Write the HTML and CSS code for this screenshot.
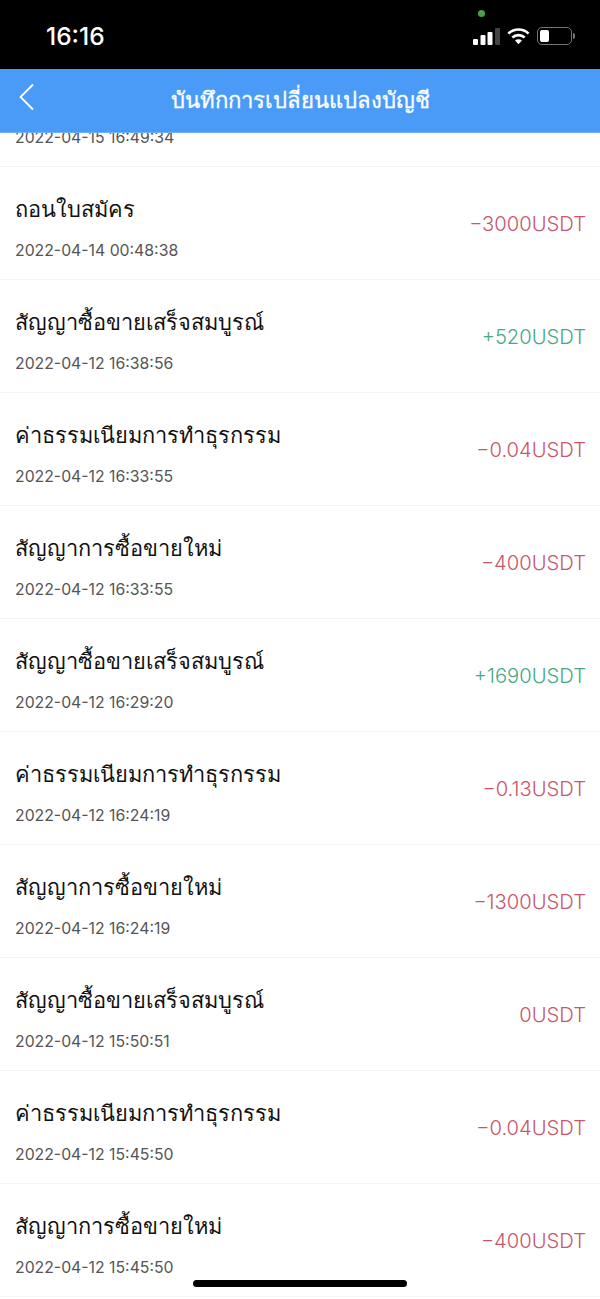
FILE: index.html
```html
<!DOCTYPE html>
<html lang="th">
<head>
<meta charset="UTF-8" />
<meta name="viewport" content="width=device-width, initial-scale=1" />
<title>บันทึกการเปลี่ยนแปลงบัญชี</title>
<link rel="stylesheet" href="styles.css">
</head>
<body>

<div class="screen">
  <div class="status-bar">
    <span class="clock">16:16</span>
    <span class="camera-dot"></span>
    <div class="status-icons">
      <svg class="signal" width="27" height="17" viewBox="0 0 27 17">
        <rect x="0" y="11" width="5" height="6" rx="1" fill="#fff"/>
        <rect x="7.5" y="7" width="5" height="10" rx="1" fill="#fff"/>
        <rect x="14.5" y="4" width="5" height="13" rx="1" fill="#fff"/>
        <rect x="22" y="0" width="5" height="17" rx="1" fill="#444"/>
      </svg>
      <svg class="wifi" width="23" height="18" viewBox="0 0 24 18">
        <path d="M1.5 6.5a15 15 0 0 1 21 0" fill="none" stroke="#fff" stroke-width="2.8"/>
        <path d="M5.6 10.6a9.2 9.2 0 0 1 12.8 0" fill="none" stroke="#fff" stroke-width="2.8"/>
        <path d="M12 17.5l-3.6-3.7a5 5 0 0 1 7.2 0z" fill="#fff"/>
      </svg>
      <div class="battery">
        <div class="battery-body"><div class="battery-level"></div></div>
        <div class="battery-cap"></div>
      </div>
    </div>
  </div>

  <header class="topbar">
    <svg class="back" width="16" height="28" viewBox="0 0 16 28">
      <path d="M14 1.5L1.5 14 14 26.5" fill="none" stroke="#fff" stroke-width="1.8"/>
    </svg>
    <h1>บันทึกการเปลี่ยนแปลงบัญชี</h1>
  </header>

  <div class="records">
    <div class="record">
      <div class="info">
        <div class="name"></div>
        <div class="time">2022-04-15 16:49:34</div>
      </div>
    </div>
    <div class="record">
      <div class="info">
        <div class="name">ถอนใบสมัคร</div>
        <div class="time">2022-04-14 00:48:38</div>
      </div>
      <div class="amount minus">−3000USDT</div>
    </div>
    <div class="record">
      <div class="info">
        <div class="name">สัญญาซื้อขายเสร็จสมบูรณ์</div>
        <div class="time">2022-04-12 16:38:56</div>
      </div>
      <div class="amount plus">+520USDT</div>
    </div>
    <div class="record">
      <div class="info">
        <div class="name">ค่าธรรมเนียมการทำธุรกรรม</div>
        <div class="time">2022-04-12 16:33:55</div>
      </div>
      <div class="amount minus">−0.04USDT</div>
    </div>
    <div class="record">
      <div class="info">
        <div class="name">สัญญาการซื้อขายใหม่</div>
        <div class="time">2022-04-12 16:33:55</div>
      </div>
      <div class="amount minus">−400USDT</div>
    </div>
    <div class="record">
      <div class="info">
        <div class="name">สัญญาซื้อขายเสร็จสมบูรณ์</div>
        <div class="time">2022-04-12 16:29:20</div>
      </div>
      <div class="amount plus">+1690USDT</div>
    </div>
    <div class="record">
      <div class="info">
        <div class="name">ค่าธรรมเนียมการทำธุรกรรม</div>
        <div class="time">2022-04-12 16:24:19</div>
      </div>
      <div class="amount minus">−0.13USDT</div>
    </div>
    <div class="record">
      <div class="info">
        <div class="name">สัญญาการซื้อขายใหม่</div>
        <div class="time">2022-04-12 16:24:19</div>
      </div>
      <div class="amount minus">−1300USDT</div>
    </div>
    <div class="record">
      <div class="info">
        <div class="name">สัญญาซื้อขายเสร็จสมบูรณ์</div>
        <div class="time">2022-04-12 15:50:51</div>
      </div>
      <div class="amount minus">0USDT</div>
    </div>
    <div class="record">
      <div class="info">
        <div class="name">ค่าธรรมเนียมการทำธุรกรรม</div>
        <div class="time">2022-04-12 15:45:50</div>
      </div>
      <div class="amount minus">−0.04USDT</div>
    </div>
    <div class="record">
      <div class="info">
        <div class="name">สัญญาการซื้อขายใหม่</div>
        <div class="time">2022-04-12 15:45:50</div>
      </div>
      <div class="amount minus">−400USDT</div>
    </div>
  </div>

  <div class="home-bar"></div>
</div>

</body>
</html>
```

FILE: styles.css
```css
* {
  box-sizing: border-box;
}

html, body {
  margin: 0;
  padding: 0;
  background: #fff;
}

body {
  font-family: Inter, "Liberation Sans", "Noto Sans", "DejaVu Sans", sans-serif;
}

.screen {
  position: relative;
  width: 600px;
  height: 1299px;
  overflow: hidden;
  background: #fff;
}

.status-bar {
  position: relative;
  z-index: 2;
  height: 69px;
  background: #000;
  display: flex;
  justify-content: space-between;
  align-items: center;
  padding: 3px 25px 0 46px;
  color: #fff;
}

.clock {
  font-size: 24.5px;
  font-weight: 500;
}

.camera-dot {
  position: absolute;
  left: 478px;
  top: 9.5px;
  width: 7px;
  height: 7px;
  border-radius: 50%;
  background: #4ca146;
}

.status-icons {
  display: flex;
  align-items: center;
  gap: 7px;
}

.battery {
  display: flex;
  align-items: center;
  gap: 1px;
}

.battery-body {
  width: 35px;
  height: 18px;
  border: 1.5px solid #777;
  border-radius: 5px;
  padding: 2px;
}

.battery-level {
  width: 9px;
  height: 100%;
  background: #fff;
  border-radius: 2px;
}

.battery-cap {
  width: 2px;
  height: 6px;
  background: #777;
  border-radius: 0 2px 2px 0;
}

.topbar {
  position: relative;
  z-index: 2;
  height: 64px;
  background: #4a9bf8;
  border-bottom: 1px solid #6fb0fa;
  display: flex;
  align-items: center;
  justify-content: center;
  color: #fff;
}

.topbar h1 {
  margin: 0;
  font-size: 22.1px;
  font-weight: 500;
  -webkit-text-stroke: 0.3px #fff;
}

.back {
  position: absolute;
  left: 19px;
  top: 14px;
}

.records {
  margin-top: -79px;
}

.record {
  height: 113px;
  border-bottom: 1px solid #f5f5f5;
  display: flex;
  justify-content: space-between;
  align-items: center;
  padding: 0 15px;
}

.info {
  display: flex;
  flex-direction: column;
  gap: 14px;
  padding-top: 5px;
}

.name {
  height: 36px;
  line-height: 36px;
  font-size: 21.8px;
  color: #111;
}

.time {
  font-size: 15.8px;
  line-height: 20px;
  color: #555;
}

.amount {
  font-size: 20.2px;
  font-weight: 300;
  margin-right: -1px;
}

.minus {
  color: #c9566b;
}

.plus {
  color: #46a983;
}

.home-bar {
  position: absolute;
  left: 193px;
  top: 1280px;
  width: 214px;
  height: 7px;
  border-radius: 4px;
  background: #000;
}
```
